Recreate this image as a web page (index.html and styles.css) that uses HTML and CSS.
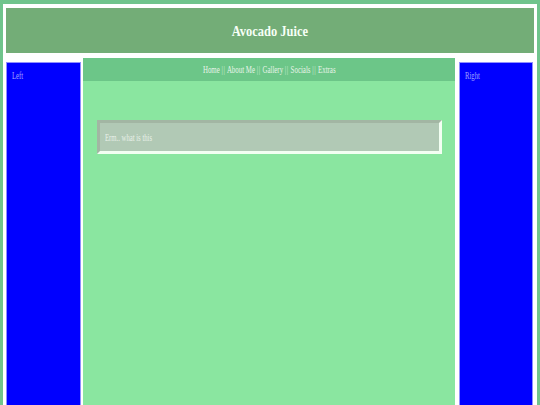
FILE: index.html
```html
<!DOCTYPE html>
<html>
<head>
<meta charset="utf-8">
<title>Avocado Juice</title>
<link rel="stylesheet" href="styles.css">
</head>
<body>
<div class="frame">
  <header class="banner"><h1 class="title"><span class="squash">Avocado Juice</span></h1></header>
  <div class="columns">
    <aside class="side"><span class="squash side-label">Left</span></aside>
    <main class="center">
      <nav class="nav"><span class="squash">Home <span class="sep">||</span> About Me <span class="sep">||</span> Gallery <span class="sep">||</span> Socials <span class="sep">||</span> Extras</span></nav>
      <div class="panel"><span class="squash panel-text">Erm.. what is this</span></div>
    </main>
    <aside class="side side-right"><span class="squash side-label">Right</span></aside>
  </div>
</div>
</body>
</html>
```

FILE: styles.css
```css
html, body {
  margin: 0;
  padding: 0;
  height: 100%;
  overflow: hidden;
}
body {
  background: #70c48c;
  font-family: "Liberation Serif", "Times New Roman", serif;
  padding: 4px 3px 0;
  box-sizing: border-box;
}
.frame {
  background: #ffffff;
  padding: 4px 3px 0;
  height: 100%;
  box-sizing: border-box;
  display: flex;
  flex-direction: column;
}
.squash {
  display: inline-block;
  white-space: nowrap;
}
.banner {
  flex: none;
  height: 45px;
  background: #73ad77;
  text-align: center;
}
.title {
  margin: 0;
  font-size: 15px;
  line-height: 46px;
  height: 45px;
  font-weight: bold;
  color: #f6fff6;
}
.title .squash {
  transform: scaleX(0.83);
  transform-origin: center;
}
.columns {
  flex: 1;
  display: grid;
  grid-template-columns: 75px 373px 75px;
  column-gap: 2px;
  margin-top: 5px;
}
.side {
  margin-top: 4px;
  background: #0000ff;
  border: 1px solid #8f8fff;
  border-bottom: none;
  padding: 5px 5px 0;
  line-height: 12px;
}
.side-right { margin-left: 1px; }
.side-label {
  font-size: 10px;
  color: #a0a0ff;
  transform: scaleX(0.67);
  transform-origin: left;
}
.center {
  background: #8ae6a0;
  margin-right: 1px;
}
.nav {
  height: 23px;
  line-height: 23px;
  background: #6cc688;
  text-align: center;
  font-size: 10.5px;
  color: #e8f4e8;
}
.nav .squash {
  transform: scaleX(0.655);
  transform-origin: center;
}
.sep {
  letter-spacing: 1px;
  color: #d4eed8;
}
.panel {
  margin: 39px 13px 0 14px;
  height: 27px;
  background: #b1c9b5;
  border: 3px solid;
  border-color: #a2b6a3 #f2fff2 #f2fff2 #a2b6a3;
  padding: 1px 5px 0;
  line-height: 27px;
  font-size: 10px;
  color: #e8f0e8;
}
.panel-text {
  transform: scaleX(0.67);
  transform-origin: left;
}
```
